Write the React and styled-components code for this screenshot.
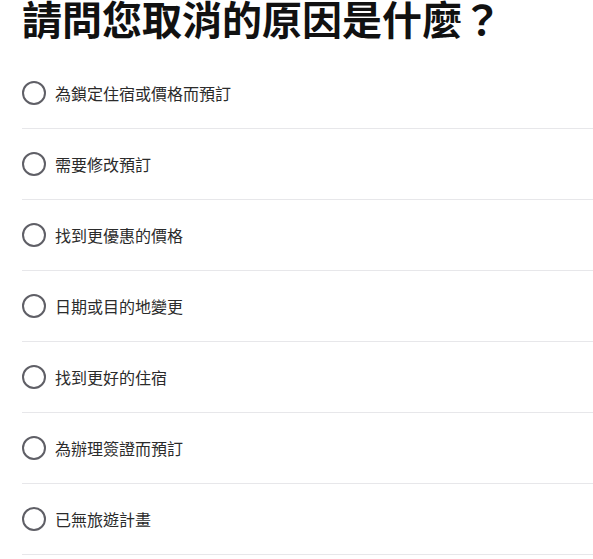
import React, { useState } from "react";
import styled, { createGlobalStyle } from "styled-components";

const GlobalStyle = createGlobalStyle`
  html, body {
    margin: 0;
    padding: 0;
    background: #fff;
  }
  body {
    font-family: "Noto Sans", "Noto Sans CJK TC", sans-serif;
  }
`;

const Page = styled.div`
  padding-left: 22px;
`;

const Title = styled.h1`
  margin: 0;
  height: 58px;
  font-size: 40px;
  line-height: 36px;
  font-weight: 700;
  color: #111;
  font-family: "Noto Sans CJK TC", sans-serif;
`;

const List = styled.div`
  display: flex;
  flex-direction: column;
`;

const Row = styled.label`
  display: flex;
  align-items: center;
  gap: 9px;
  height: 70px;
  border-bottom: 1px solid #e7e7ea;
  cursor: pointer;
`;

const Radio = styled.span`
  box-sizing: border-box;
  width: 24px;
  height: 24px;
  border-radius: 50%;
  border: 2px solid ${(p) => (p.checked ? "#0071c2" : "#5f5f66")};
  display: flex;
  align-items: center;
  justify-content: center;
  flex-shrink: 0;

  &::after {
    content: "";
    width: 12px;
    height: 12px;
    border-radius: 50%;
    background: #0071c2;
    display: ${(p) => (p.checked ? "block" : "none")};
  }
`;

const Label = styled.span`
  font-size: 16px;
  color: #2b2b2b;
  font-family: "Noto Sans CJK TC", sans-serif;
`;

const reasons = [
  "為鎖定住宿或價格而預訂",
  "需要修改預訂",
  "找到更優惠的價格",
  "日期或目的地變更",
  "找到更好的住宿",
  "為辦理簽證而預訂",
  "已無旅遊計畫",
];

export default function App() {
  const [picked, setPicked] = useState(null);

  return (
    <Page>
      <GlobalStyle />
      <Title>請問您取消的原因是什麼？</Title>
      <List>
        {reasons.map((r, i) => (
          <Row key={r} onClick={() => setPicked(i)}>
            <Radio checked={picked === i} />
            <Label>{r}</Label>
          </Row>
        ))}
      </List>
    </Page>
  );
}
